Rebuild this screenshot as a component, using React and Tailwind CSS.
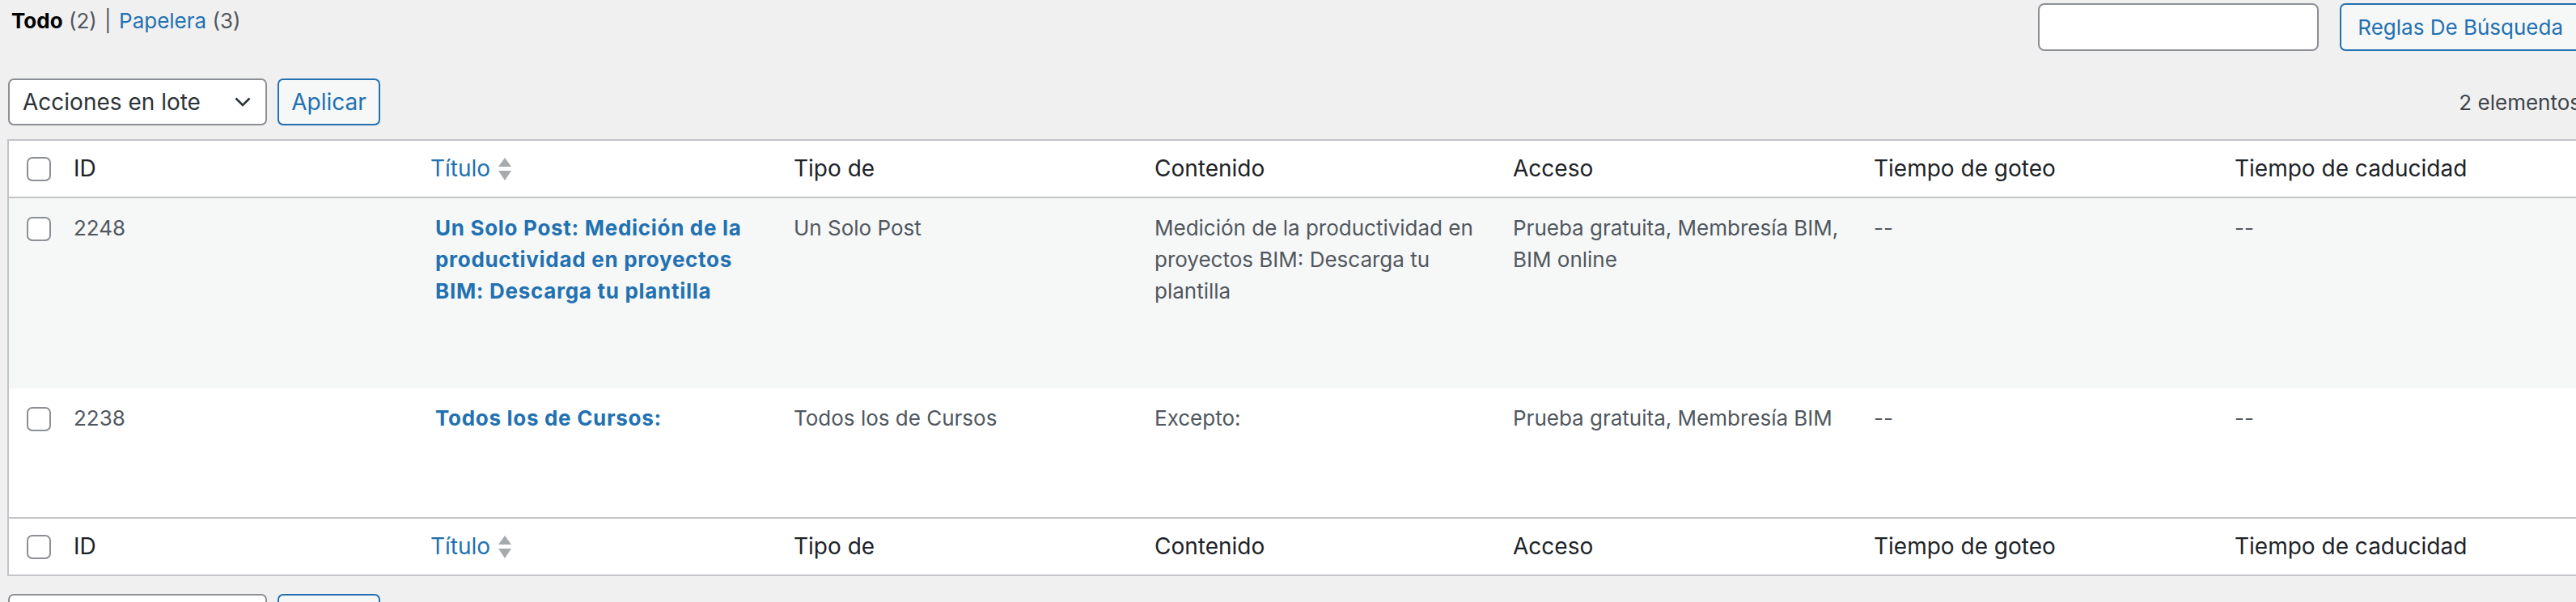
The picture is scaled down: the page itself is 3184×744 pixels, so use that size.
import React from "react";

const rows = [
    {
        id: "2248",
        title: ["Un Solo Post: Medición de la", "productividad en proyectos", "BIM: Descarga tu plantilla"],
        type: ["Un Solo Post"],
        content: ["Medición de la productividad en", "proyectos BIM: Descarga tu", "plantilla"],
        access: ["Prueba gratuita, Membresía BIM,", "BIM online"],
        drip: "--",
        expire: "--",
        height: "h-[236px]",
        bg: "bg-[#f6f7f7]",
    },
    {
        id: "2238",
        title: ["Todos los de Cursos:"],
        type: ["Todos los de Cursos"],
        content: ["Excepto:"],
        access: ["Prueba gratuita, Membresía BIM"],
        drip: "--",
        expire: "--",
        height: "h-[160px]",
        bg: "bg-white",
    },
];

const Checkbox = () => (
    <span className="block w-[30px] h-[30px] bg-white border-2 border-[#8c8f94] rounded-[7px]" />
);

const SortArrows = () => (
    <svg width="18" height="28" viewBox="0 0 18 28" className="ml-[9px]">
        <path d="M9 0 L17 11 L1 11 Z" fill="#a7aaad" />
        <path d="M1 16 L17 16 L9 28 Z" fill="#a7aaad" />
    </svg>
);

const Lines = ({ lines }) => (
    <>
        {lines.map((line) => (
            <span key={line} className="block whitespace-nowrap">
                {line}
            </span>
        ))}
    </>
);

const HeaderRow = ({ footer }) => {
    const edge = footer ? "border-t-2" : "border-b-2";
    const th = `px-[20px] h-[70px] text-left font-normal align-middle ${edge} border-[#c3c4c7]`;
    return (
        <tr className="text-[28px] leading-[39px] text-[#1d2327]">
            <th className={`pl-[22px] h-[70px] align-middle ${edge} border-[#c3c4c7]`}>
                <Checkbox />
            </th>
            <th className={th}>ID</th>
            <th className={th}>
                <span className="flex items-center text-[#2271b1]">
                    Título
                    <SortArrows />
                </span>
            </th>
            <th className={th}>Tipo de</th>
            <th className={th}>Contenido</th>
            <th className={th}>Acceso</th>
            <th className={th}>Tiempo de goteo</th>
            <th className={th}>Tiempo de caducidad</th>
        </tr>
    );
};

const BulkActions = () => (
    <div className="flex gap-[13px]">
        <div className="w-[320px] h-[58px] flex items-center justify-between pl-[16px] pr-[18px] bg-white border-2 border-[#8c8f94] rounded-[7px] text-[28px] text-[#2c3338]">
            <span>Acciones en lote</span>
            <svg width="20" height="12" viewBox="0 0 20 12">
                <path d="M1.5 1.5 L10 10 L18.5 1.5" fill="none" stroke="#2c3338" strokeWidth="2.6" />
            </svg>
        </div>
        <button className="w-[127px] h-[58px] bg-[#f6f7f7] border-2 border-[#2271b1] rounded-[7px] text-[28px] text-[#2271b1]">
            Aplicar
        </button>
    </div>
);

export default function App() {
    return (
        <div className="w-full h-[744px] overflow-hidden bg-[#f0f0f1] font-['Inter','Liberation_Sans',sans-serif] text-[#50575e]">
            <div className="w-[3190px] pl-[9px]">
                {/* Views + search */}
                <div className="flex justify-between items-start h-[63px]">
                    <div className="pl-[5px] mt-[6px] text-[26px] leading-[39px]">
                        <span className="font-bold text-black">Todo</span> (2){" "}
                        <span className="mx-[2px] text-[#50575e]">|</span>{" "}
                        <span className="text-[#2271b1]">Papelera</span> (3)
                    </div>
                    <div className="flex gap-[26px] mt-[4px]">
                        <div className="w-[347px] h-[59px] bg-white border-2 border-[#8c8f94] rounded-[8px]" />
                        <button className="h-[59px] px-[20px] bg-[#f6f7f7] border-2 border-[#2271b1] rounded-[7px] text-[26px] text-[#2271b1] whitespace-nowrap">
                            Reglas De Búsqueda
                        </button>
                    </div>
                </div>

                {/* Top tablenav */}
                <div className="flex justify-between items-center mt-[34px] pl-[1px]">
                    <BulkActions />
                    <span className="text-[26px] text-[#3c434a] whitespace-nowrap">2 elementos</span>
                </div>

                {/* List table */}
                <div className="mt-[17px] border-2 border-[#c3c4c7] bg-white">
                    <table className="w-full table-fixed border-collapse">
                        <colgroup>
                            <col className="w-[60px]" />
                            <col className="w-[441px]" />
                            <col className="w-[449px]" />
                            <col className="w-[446px]" />
                            <col className="w-[443px]" />
                            <col className="w-[446px]" />
                            <col className="w-[446px]" />
                            <col />
                        </colgroup>
                        <thead>
                            <HeaderRow />
                        </thead>
                        <tbody className="text-[26px] leading-[39px]">
                            {rows.map((row) => (
                                <tr key={row.id} className={`${row.height} ${row.bg} align-top`}>
                                    <td className="pl-[22px] pt-[23px]">
                                        <Checkbox />
                                    </td>
                                    <td className="px-[20px] pt-[17px]">{row.id}</td>
                                    <td className="pl-[26px] pr-[10px] pt-[17px] font-bold tracking-[0.7px] text-[#2271b1]">
                                        <Lines lines={row.title} />
                                    </td>
                                    <td className="px-[20px] pt-[17px]">
                                        <Lines lines={row.type} />
                                    </td>
                                    <td className="px-[20px] pt-[17px]">
                                        <Lines lines={row.content} />
                                    </td>
                                    <td className="px-[20px] pt-[17px]">
                                        <Lines lines={row.access} />
                                    </td>
                                    <td className="px-[20px] pt-[17px]">{row.drip}</td>
                                    <td className="px-[20px] pt-[17px]">{row.expire}</td>
                                </tr>
                            ))}
                        </tbody>
                        <tfoot>
                            <HeaderRow footer />
                        </tfoot>
                    </table>
                </div>

                {/* Bottom tablenav */}
                <div className="mt-[22px] pl-[1px]">
                    <BulkActions />
                </div>
            </div>
        </div>
    );
}
